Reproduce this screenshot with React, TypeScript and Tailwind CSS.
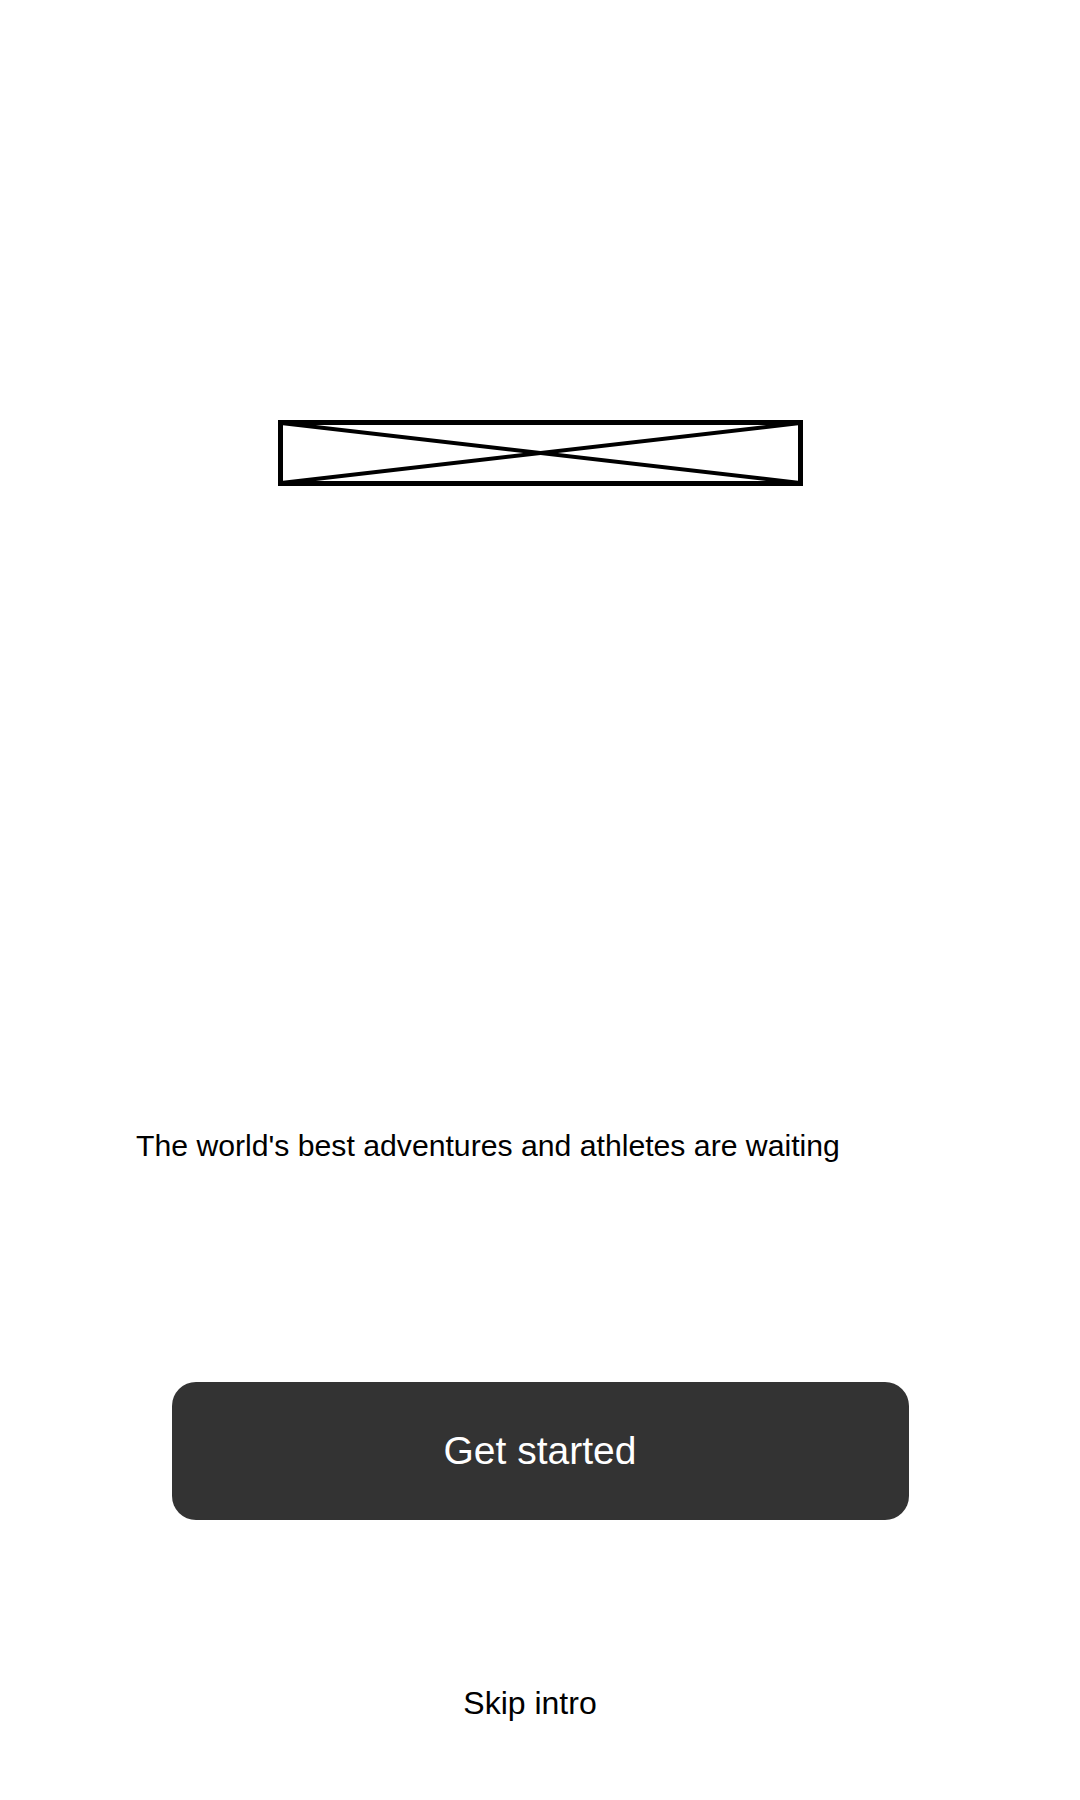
export default function App() {
  return (
    <div
      className="flex h-[1800px] w-[1080px] flex-col bg-white text-black"
      style={{ fontFamily: '"Liberation Sans", Arial, sans-serif' }}
    >
      {/* image placeholder */}
      <div className="mx-auto mt-[420px] h-[66px] w-[525px]">
        <svg width="525" height="66" viewBox="0 0 525 66" className="block">
          <rect x="2.5" y="2.5" width="520" height="61" fill="none" stroke="#000" strokeWidth="5" />
          <line x1="3" y1="3" x2="522" y2="63" stroke="#000" strokeWidth="4" />
          <line x1="3" y1="63" x2="522" y2="3" stroke="#000" strokeWidth="4" />
        </svg>
      </div>

      <p className="mt-[645px] pl-[136px] text-[30.2px] leading-none">
        The world's best adventures and athletes are waiting
      </p>

      <button className="mx-auto mt-[221px] flex h-[138px] w-[737px] items-center justify-center rounded-[24px] bg-[#333333] text-[39px] text-white">
        Get started
      </button>

      <a className="mx-auto mt-[167px] pr-[20px] text-[32px] leading-none">Skip intro</a>
    </div>
  )
}
